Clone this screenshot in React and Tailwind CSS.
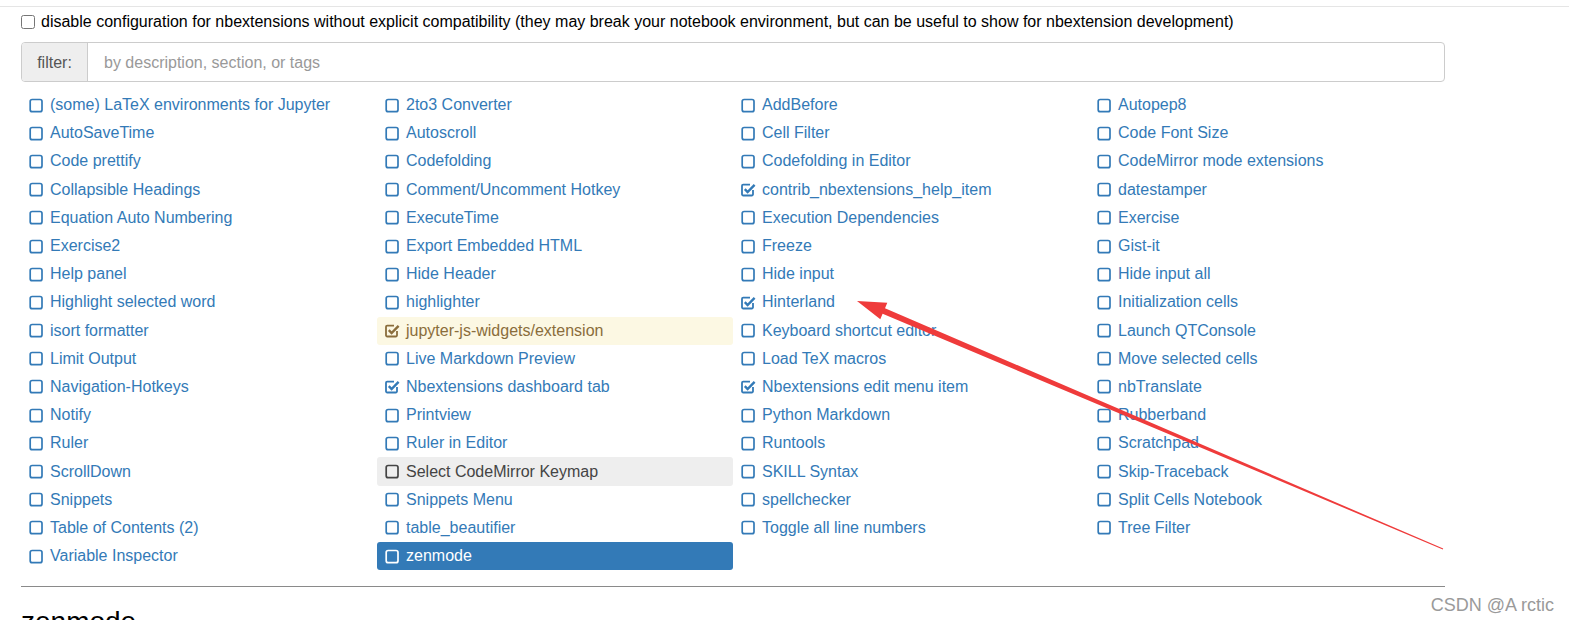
import React from 'react';

const rows = [
  ['(some) LaTeX environments for Jupyter', '2to3 Converter', 'AddBefore', 'Autopep8'],
  ['AutoSaveTime', 'Autoscroll', 'Cell Filter', 'Code Font Size'],
  ['Code prettify', 'Codefolding', 'Codefolding in Editor', 'CodeMirror mode extensions'],
  ['Collapsible Headings', 'Comment/Uncomment Hotkey', 'contrib_nbextensions_help_item', 'datestamper'],
  ['Equation Auto Numbering', 'ExecuteTime', 'Execution Dependencies', 'Exercise'],
  ['Exercise2', 'Export Embedded HTML', 'Freeze', 'Gist-it'],
  ['Help panel', 'Hide Header', 'Hide input', 'Hide input all'],
  ['Highlight selected word', 'highlighter', 'Hinterland', 'Initialization cells'],
  ['isort formatter', 'jupyter-js-widgets/extension', 'Keyboard shortcut editor', 'Launch QTConsole'],
  ['Limit Output', 'Live Markdown Preview', 'Load TeX macros', 'Move selected cells'],
  ['Navigation-Hotkeys', 'Nbextensions dashboard tab', 'Nbextensions edit menu item', 'nbTranslate'],
  ['Notify', 'Printview', 'Python Markdown', 'Rubberband'],
  ['Ruler', 'Ruler in Editor', 'Runtools', 'Scratchpad'],
  ['ScrollDown', 'Select CodeMirror Keymap', 'SKILL Syntax', 'Skip-Traceback'],
  ['Snippets', 'Snippets Menu', 'spellchecker', 'Split Cells Notebook'],
  ['Table of Contents (2)', 'table_beautifier', 'Toggle all line numbers', 'Tree Filter'],
  ['Variable Inspector', 'zenmode'],
];

const checked = new Set([
  'contrib_nbextensions_help_item',
  'Hinterland',
  'jupyter-js-widgets/extension',
  'Nbextensions dashboard tab',
  'Nbextensions edit menu item',
]);

const BoxIcon = ({ on }) => (
  <svg width="15" height="15" viewBox="0 0 15 15" className="shrink-0">
    {on ? (
      <>
        <path
          d="M12 8V12.3a1.2 1.2 0 0 1-1.2 1.2H2.2a1.2 1.2 0 0 1-1.2-1.2V3.8a1.2 1.2 0 0 1 1.2-1.2H9"
          fill="none"
          stroke="currentColor"
          strokeWidth="1.8"
        />
        <path d="M3.8 7.2L6.6 10L13.6 2.8" fill="none" stroke="currentColor" strokeWidth="2.4" />
      </>
    ) : (
      <rect x="1.2" y="1.5" width="11.8" height="12.2" rx="2" fill="none" stroke="currentColor" strokeWidth="1.7" />
    )}
  </svg>
);

const Item = ({ name }) => {
  let tone = 'text-[#337ab7]';
  if (name === 'jupyter-js-widgets/extension') tone = 'bg-[#fcf8e3] text-[#8a6d3b]';
  if (name === 'Select CodeMirror Keymap') tone = 'bg-[#eeeeee] text-[#444]';
  if (name === 'zenmode') tone = 'bg-[#337ab7] text-white';
  return (
    <div className={`flex items-center gap-[6px] rounded-[3px] pl-[8px] ${tone}`}>
      <BoxIcon on={checked.has(name)} />
      <span className="whitespace-nowrap">{name}</span>
    </div>
  );
};

export default function App() {
  return (
    <div className="relative h-[620px] w-full overflow-hidden bg-white font-['Liberation_Sans',Arial,sans-serif] text-[16px]">
      <div className="h-[6px]" />
      <div className="border-t border-[#e5e5e5] px-[21px]">
        <div className="w-[1424px]">
          <label className="flex h-[29px] items-center gap-[6px] text-black">
            <input type="checkbox" className="m-0 h-[14px] w-[14px]" />
            <span>
              disable configuration for nbextensions without explicit compatibility (they may break your notebook
              environment, but can be useful to show for nbextension development)
            </span>
          </label>

          <div className="mt-[6px] flex h-[40px] rounded-[4px] border border-[#cccccc]">
            <div className="flex w-[66px] items-center justify-center rounded-l-[3px] border-r border-[#cccccc] bg-[#eeeeee] pt-[1px] text-[#555]">
              filter:
            </div>
            <input
              className="flex-1 rounded-r-[4px] px-[16px] pt-[1px] text-[#555] outline-none placeholder:text-[#999]"
              placeholder="by description, section, or tags"
            />
          </div>

          <div className="mt-[9px] grid grid-cols-4 auto-rows-[28.2px]">
            {rows.flat().map((name) => (
              <Item key={name} name={name} />
            ))}
          </div>

          <div className="mt-[16px] border-t border-[#8a8a8a]" />
          <h2 className="mt-[20px] text-[28px] leading-[1.1] text-black">zenmode</h2>
        </div>
      </div>

      <svg className="pointer-events-none absolute left-0 top-0" width="1569" height="620">
        <polygon
          points="857,301 887.3,302.7 885,308.2 1443.2,548.6 1442.8,549.4 882.6,313.8 880.3,319.3"
          fill="#ef3b3b"
        />
      </svg>

      <div className="absolute right-[15px] top-[592px] text-[18px] text-[#9a9a9a] [text-shadow:0_0_2px_#fff]">
        CSDN @A rctic
      </div>
    </div>
  );
}
